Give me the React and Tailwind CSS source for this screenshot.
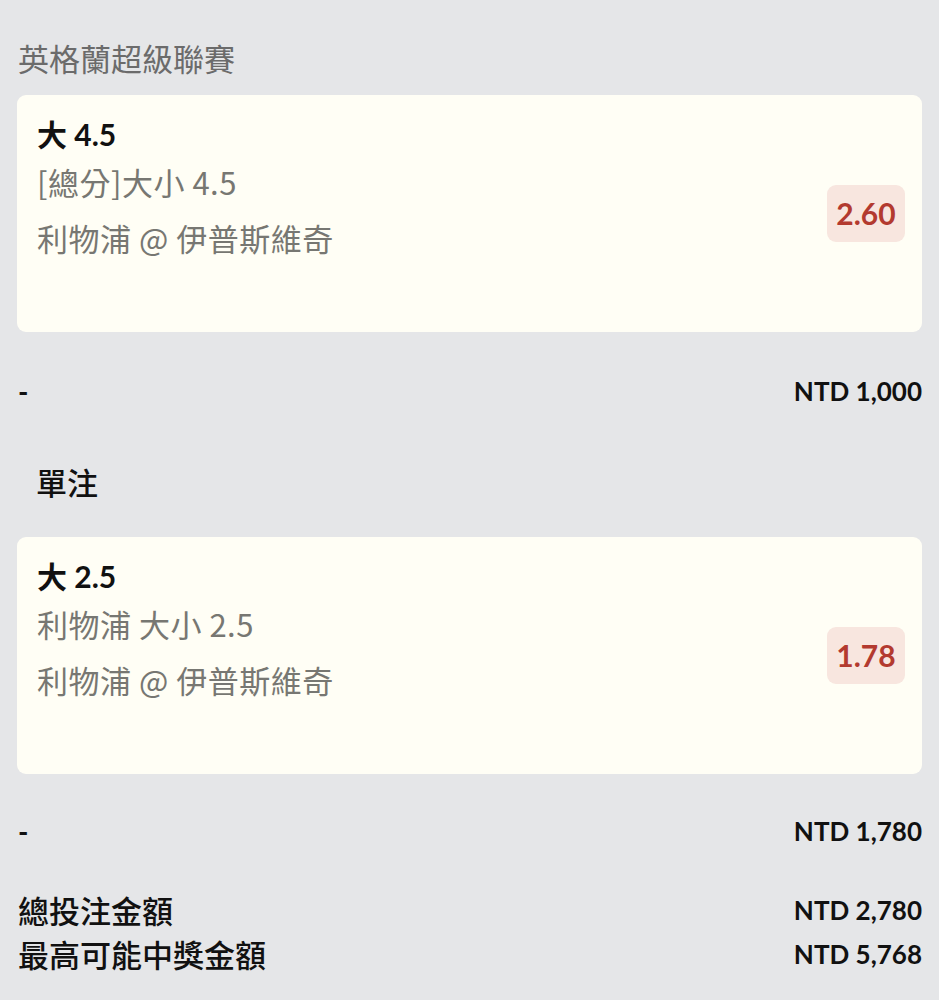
import React from "react";

const lato = { fontFamily: 'Lato, "Noto Sans CJK TC", sans-serif' };
const noto = { fontFamily: '"Noto Sans CJK TC", "Noto Sans", sans-serif' };

function Card({ title, line1, line2, odds }) {
  return (
    <div className="mx-[17px] h-[237px] rounded-[9px] bg-[#fffef5] flex items-center justify-between pl-[20px] pr-[17px]">
      <div className="self-start pt-[18px] flex flex-col">
        <div className="h-[42px] leading-[42px] text-[30px] font-bold text-[#111]">{title}</div>
        <div className="h-[54px] leading-[54px] text-[31px] tracking-[0.5px] text-[#777772]" style={noto}>{line1}</div>
        <div className="h-[58px] leading-[58px] text-[31px] tracking-[0.5px] text-[#777772]" style={noto}>{line2}</div>
      </div>
      <div className="w-[78px] h-[57px] rounded-[9px] bg-[#f8e6df] flex items-center justify-center text-[30px] font-bold text-[#b33a2f]">
        {odds}
      </div>
    </div>
  );
}

function Row({ left, right, className = "" }) {
  return (
    <div className={"flex items-center justify-between pl-[18px] pr-[17px] " + className}>
      <span className="text-[28px] font-bold text-[#111]">{left}</span>
      <span className="text-[26px] font-bold text-[#111]">{right}</span>
    </div>
  );
}

export default function App() {
  return (
    <div className="w-[939px] h-[1000px] bg-[#e5e6e8] overflow-hidden" style={lato}>
      <div className="h-[95px] pl-[18px] pt-[38px]">
        <div className="h-[40px] leading-[40px] text-[31px] text-[#6b6b6b]" style={noto}>英格蘭超級聯賽</div>
      </div>
      <Card title="大 4.5" line1="[總分]大小 4.5" line2="利物浦 @ 伊普斯維奇" odds="2.60" />
      <Row left="-" right="NTD 1,000" className="h-[40px] mt-[39px]" />
      <div className="h-[40px] mt-[51px] pl-[36px] flex items-center text-[31px] font-medium text-[#111]" style={noto}>單注</div>
      <div className="h-[35px]" />
      <Card title="大 2.5" line1="利物浦 大小 2.5" line2="利物浦 @ 伊普斯維奇" odds="1.78" />
      <Row left="-" right="NTD 1,780" className="h-[40px] mt-[37px]" />
      <div className="mt-[37px] pl-[18px] pr-[17px] flex flex-col">
        <div className="flex items-center justify-between h-[44px]">
          <span className="text-[31px] font-medium text-[#111]" style={noto}>總投注金額</span>
          <span className="text-[26px] font-bold text-[#111]">NTD 2,780</span>
        </div>
        <div className="flex items-center justify-between h-[44px]">
          <span className="text-[31px] font-medium text-[#111]" style={noto}>最高可能中獎金額</span>
          <span className="text-[26px] font-bold text-[#111]">NTD 5,768</span>
        </div>
      </div>
    </div>
  );
}
